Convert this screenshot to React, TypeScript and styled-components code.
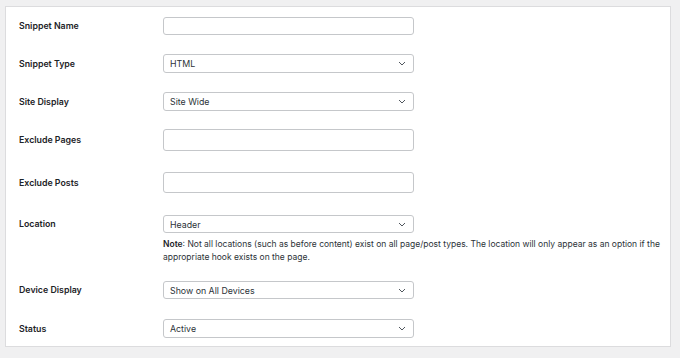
import React from 'react'
import styled, {createGlobalStyle} from 'styled-components'

const GlobalStyle = createGlobalStyle`
  html, body {
    margin: 0;
    padding: 0;
    background: #f0f0f1;
  }
  body {
    font-family: Inter, 'Liberation Sans', sans-serif;
    color: #1d2327;
  }
`

type FieldKind = 'text' | 'select'

interface SettingRow {
    label: string
    kind: FieldKind
    value?: string
    height: number
    space: number
    note?: boolean
}

const rows: SettingRow[] = [
    {label: 'Snippet Name', kind: 'text', height: 18, space: 0},
    {label: 'Snippet Type', kind: 'select', value: 'HTML', height: 19, space: 19},
    {label: 'Site Display', kind: 'select', value: 'Site Wide', height: 19, space: 19},
    {label: 'Exclude Pages', kind: 'text', height: 22, space: 18},
    {label: 'Exclude Posts', kind: 'text', height: 21, space: 21},
    {label: 'Location', kind: 'select', value: 'Header', height: 18, space: 22, note: true},
    {label: 'Device Display', kind: 'select', value: 'Show on All Devices', height: 18, space: 18},
    {label: 'Status', kind: 'select', value: 'Active', height: 19, space: 20},
]

function Chevron() {
    return (
        <Arrow width="8" height="5" viewBox="0 0 8 5">
            <polyline points="1,1 4,4 7,1" fill="none" stroke="#50575e" strokeWidth="1"/>
        </Arrow>
    )
}

function App() {
    return (
        <>
            <GlobalStyle/>
            <Page>
                <Panel>
                    {rows.map(row => (
                        <Row key={row.label} $space={row.space}>
                            <Label $height={row.height}>{row.label}</Label>
                            <Field>
                                {row.kind === 'text' ? (
                                    <TextBox $height={row.height}/>
                                ) : (
                                    <SelectBox $height={row.height}>
                                        <span>{row.value}</span>
                                        <Chevron/>
                                    </SelectBox>
                                )}
                                {row.note && (
                                    <Note>
                                        <b>Note</b>: Not all locations (such as before content) exist on all
                                        page/post types. The location will only appear as an option if the
                                        appropriate hook exists on the page.
                                    </Note>
                                )}
                            </Field>
                        </Row>
                    ))}
                </Panel>
            </Page>
        </>
    )
}

const Page = styled.div`
  padding: 6px 9px 10px 5px;
`

const Panel = styled.section`
  background: #fff;
  border: 1px solid #dcdcde;
  padding: 10px 0 8px;
  display: flex;
  flex-direction: column;
`

const Row = styled.div<{ $space: number }>`
  display: grid;
  grid-template-columns: 157px 1fr;
  margin-top: ${p => p.$space}px;
  padding-right: 2px;
`

const Label = styled.div<{ $height: number }>`
  padding-left: 13px;
  font-size: 8.8px;
  font-weight: 600;
  line-height: ${p => p.$height}px;
  color: #1d2327;
`

const Field = styled.div`
  display: flex;
  flex-direction: column;
`

const TextBox = styled.div<{ $height: number }>`
  box-sizing: border-box;
  width: 251px;
  height: ${p => p.$height}px;
  border: 1px solid #c5c7ca;
  border-radius: 3px;
  background: #fff;
`

const SelectBox = styled(TextBox)`
  display: flex;
  align-items: center;
  justify-content: space-between;
  padding: 0 7px 0 6px;
  font-size: 8.8px;
  color: #2c3338;
`

const Arrow = styled.svg`
  display: block;
`

const Note = styled.p`
  margin: 5px 0 0;
  font-size: 8.5px;
  line-height: 12.5px;
  color: #2c3338;

  b {
    font-weight: 600;
    color: #1d2327;
  }
`

export default App
